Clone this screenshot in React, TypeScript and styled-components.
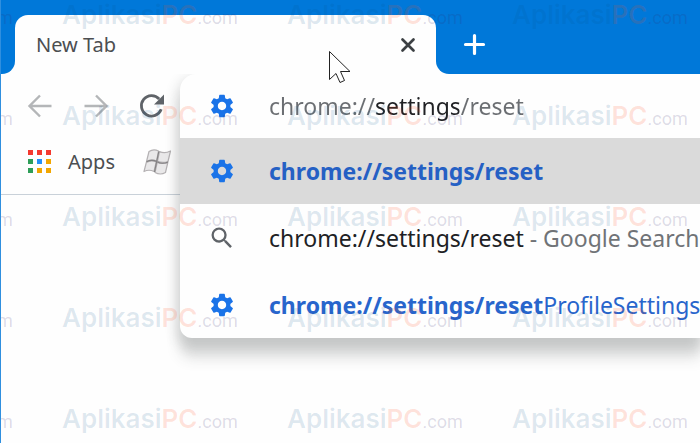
import React from "react";
import styled, { createGlobalStyle } from "styled-components";
import { MdSearch, MdSettings } from "react-icons/md";

const uiFont = '"Noto Sans", "Open Sans", sans-serif';
const blue = "#0078d9";

const GlobalStyle = createGlobalStyle`
  *, *::before, *::after { box-sizing: border-box; }
  body { margin: 0; background: #fefefe; font-family: ${uiFont}; }
  button { font: inherit; border: 0; padding: 0; background: none; }
`;

const Window = styled.div`
  position: relative;
  min-height: 100vh;
  overflow: hidden;
  background: #fefefe;
  border-left: 1px solid #2f8fdf;
`;

const TabStrip = styled.header`
  display: flex;
  height: 74px;
`;

const StripStart = styled.div`
  width: 14px;
  background: ${blue};
  border-bottom-right-radius: 13px;
`;

const TabSlot = styled.div`
  flex: 0 0 421px;
  padding-top: 15px;
  background: linear-gradient(${blue} 50%, #fefefe 50%);
`;

const Tab = styled.div`
  display: flex;
  align-items: center;
  justify-content: space-between;
  height: 59px;
  padding: 0 20px 0 21px;
  border-radius: 13px 13px 0 0;
  background: #fefefe;
  color: #4c4e51;
  font-size: 20px;
  line-height: 24px;
`;

const StripEnd = styled.div`
  flex: 1;
  display: flex;
  align-items: center;
  padding: 15px 0 0 27px;
  background: ${blue};
  border-bottom-left-radius: 13px;
`;

const IconButton = styled.button`
  display: flex;
  color: ${(p) => p.color};
`;

const Chrome = styled.div`
  position: relative;
`;

const Toolbar = styled.nav`
  display: flex;
  align-items: center;
  gap: 28px;
  height: 64px;
  padding-left: 25px;
`;

const Bookmarks = styled.nav`
  display: flex;
  align-items: center;
  gap: 28px;
  height: 57px;
  padding: 0 0 9px 27px;
  border-bottom: 1px solid #c9d1d9;
`;

const Bookmark = styled.a`
  display: flex;
  align-items: center;
  gap: 17px;
  color: #4c4e51;
  font-size: 20px;
  line-height: 24px;
  text-decoration: none;
`;

const AppsGrid = styled.span`
  display: grid;
  grid-template-columns: repeat(3, 5px);
  grid-auto-rows: 5px;
  gap: 4px;
`;

const Dot = styled.span<{ $fill: string }>`
  background: ${(p) => p.$fill};
`;

const Omnibox = styled.section`
  position: absolute;
  top: 0;
  left: 179px;
  right: 0;
  border-radius: 16px 0 0 12px;
  background: #fefefe;
  box-shadow: 0 20px 14px rgba(60, 64, 67, 0.17), 0 6px 12px 4px rgba(60, 64, 67, 0.15);
  clip-path: inset(0 0 -50px -40px);
`;

const rowLayout = `
  display: flex;
  align-items: center;
  gap: 33px;
  padding-left: 28px;
  font-size: 23px;
  line-height: 32px;
  white-space: nowrap;
`;

const AddressRow = styled.label`
  ${rowLayout}
  height: 64px;
`;

const Address = styled.input`
  flex: 1;
  min-width: 0;
  height: 40px;
  padding: 0;
  border: 0;
  outline: 0;
  font: inherit;
  color: transparent;
  background: linear-gradient(90deg, #6b6e72 107px, #202124 107px, #202124 190px, #6b6e72 190px);
  background-clip: text;
  -webkit-background-clip: text;
`;

const Suggestions = styled.ul`
  margin: 0;
  padding: 0;
  list-style: none;
`;

const Suggestion = styled.a<{ $selected?: boolean; $tone: string }>`
  ${rowLayout}
  height: ${(p) => (p.$selected ? "66px" : "67px")};
  overflow: hidden;
  color: ${(p) => p.$tone};
  background: ${(p) => (p.$selected ? "#dadada" : "transparent")};
  text-decoration: none;
`;

const RowIcon = styled.span<{ $tone: string }>`
  display: flex;
  flex: none;
  color: ${(p) => p.$tone};
`;

const Muted = styled.span`
  color: #707377;
`;

const Pointer = styled.svg`
  position: absolute;
  top: 50px;
  left: 326px;
  pointer-events: none;
`;

const Watermarks = styled.div`
  position: absolute;
  inset: 0 auto auto -164px;
  display: grid;
  grid-template-columns: repeat(4, 225px);
  grid-auto-rows: 101px;
  pointer-events: none;
  user-select: none;
`;

const Mark = styled.div`
  font: 600 26px/30px Inter, sans-serif;
  color: rgba(0, 80, 140, 0.13);
  white-space: nowrap;
`;

const MarkAccent = styled.span`
  color: rgba(255, 80, 30, 0.16);
`;

const MarkSuffix = styled.span`
  font: 400 18px/30px Roboto, sans-serif;
  color: rgba(50, 40, 110, 0.17);
`;

const appColors = ["#f4392f", "#f4392f", "#f4392f", "#2e9e58", "#2490f8", "#f2a600", "#2e9e58", "#f2a600", "#f2a600"];

const Gear = () => (
  <RowIcon $tone="#1a73e8"><MdSettings size={28} /></RowIcon>
);

const WindowsFlag = () => (
  <svg width="29" height="28" viewBox="0 0 29 28" fill="#e9e8e9" stroke="#b4b1b3" strokeWidth="1.2" strokeLinejoin="round">
    <path d="M6 3.500Q10.500 0.500 15.500 3L13.500 13Q8.500 10.500 3.500 13.500Z" />
    <path d="M16.500 3.500Q21.500 6 27.500 3L25 13.500Q20 15.500 14.500 13.300Z" />
    <path d="M3.300 14.500Q8 11.500 13.200 14L11 23.500Q6 21 1 23.500Z" />
    <path d="M14.200 14.500Q19.500 16.500 24.800 14.500L22.500 24.500Q17.500 27.500 12 24.500Z" />
    <path d="M15.800 3.500L11.500 24M3.500 13.800Q9 11 14 13.800T25 14" fill="none" stroke="#858385" />
  </svg>
);

export default function App() {
  return (
    <Window>
      <GlobalStyle />
      <TabStrip>
        <StripStart />
        <TabSlot>
          <Tab>
            <span>New Tab</span>
            <IconButton color="#3c4043" aria-label="Close tab">
              <svg width="16" height="16" viewBox="0 0 16 16" stroke="currentColor" strokeWidth="2.700" strokeLinecap="round">
                <path d="M2.500 2.500L13.500 13.500M13.500 2.500L2.500 13.500" />
              </svg>
            </IconButton>
          </Tab>
        </TabSlot>
        <StripEnd>
          <IconButton color="#fff" aria-label="Open new tab">
            <svg width="23" height="23" viewBox="0 0 23 23" stroke="currentColor" strokeWidth="3.200" strokeLinecap="round">
              <path d="M11.500 2.500V20.500M2.500 11.500H20.500" />
            </svg>
          </IconButton>
        </StripEnd>
      </TabStrip>

      <Chrome>
        <Toolbar aria-label="Navigation">
          <IconButton color="#b4b6b8" aria-label="Back">
            <svg width="28" height="28" viewBox="0 0 28 28" fill="none" stroke="currentColor" strokeWidth="2.400">
              <path d="M25.500 14H4M14 3.500L3.500 14L14 24.500" />
            </svg>
          </IconButton>
          <IconButton color="#b4b6b8" aria-label="Forward">
            <svg width="28" height="28" viewBox="0 0 28 28" fill="none" stroke="currentColor" strokeWidth="2.400">
              <path d="M2.500 14H24M14 3.500L24.500 14L14 24.500" />
            </svg>
          </IconButton>
          <IconButton color="#5f6368" aria-label="Reload">
            <svg width="28" height="28" viewBox="0 0 28 28" fill="none">
              <path d="M23.200 17.300A10.200 10.200 0 1 1 21.200 7" stroke="currentColor" strokeWidth="2.800" />
              <path d="M26 2.500V12.500H16Z" fill="currentColor" />
            </svg>
          </IconButton>
        </Toolbar>
        <Bookmarks aria-label="Bookmarks">
          <Bookmark href="#apps">
            <AppsGrid>
              {appColors.map((fill, i) => <Dot key={i} $fill={fill} />)}
            </AppsGrid>
            Apps
          </Bookmark>
          <Bookmark href="#windows" aria-label="Windows">
            <WindowsFlag />
          </Bookmark>
        </Bookmarks>

        <Omnibox>
          <AddressRow>
            <Gear />
            <Address aria-label="Address" defaultValue="chrome://settings/reset" spellCheck={false} />
          </AddressRow>
          <Suggestions>
            <li>
              <Suggestion href="#reset" $selected $tone="#2560c4">
                <Gear />
                <b>chrome://settings/reset</b>
              </Suggestion>
            </li>
            <li>
              <Suggestion href="#search" $tone="#202124">
                <RowIcon $tone="#5f6368"><MdSearch size={28} /></RowIcon>
                <span>chrome://settings/reset <Muted>- Google Search</Muted></span>
              </Suggestion>
            </li>
            <li>
              <Suggestion href="#profile" $tone="#2865cc">
                <Gear />
                <span><b>chrome://settings/reset</b>ProfileSettings</span>
              </Suggestion>
            </li>
          </Suggestions>
        </Omnibox>
      </Chrome>

      <Pointer width="26" height="34" viewBox="0 0 26 34" fill="#fefefe" stroke="#222" strokeWidth="1">
        <path d="M2.500 1.500V29.500L9 23.500L13 32.500L17.500 30.500L13.500 21.500H23Z" />
      </Pointer>

      <Watermarks aria-hidden="true">
        {Array.from({ length: 20 }, (_, i) => (
          <Mark key={i}>Aplikasi<MarkAccent>PC</MarkAccent><MarkSuffix>.com</MarkSuffix></Mark>
        ))}
      </Watermarks>
    </Window>
  );
}
